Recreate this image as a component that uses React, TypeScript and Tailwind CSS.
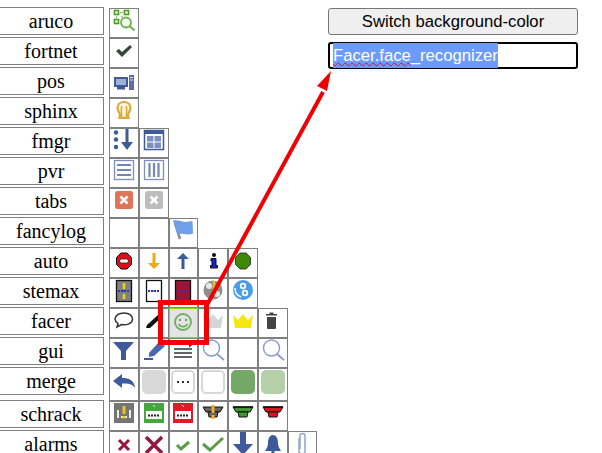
const blue = "#3f5a9a";

function Icon({ children }: { children: React.ReactNode }) {
  return (
    <svg viewBox="0 0 24 24" className="w-[24px] h-[24px] shrink-0">
      {children}
    </svg>
  );
}

const ArucoIcon = () => (
  <Icon>
    <g fill="none" stroke="#4c9a1e" strokeWidth="1.600">
      <rect x="2.500" y="1.500" width="4" height="4" />
      <rect x="12.500" y="1.500" width="4" height="4" />
      <rect x="2.500" y="10.500" width="4" height="4" />
    </g>
    <path d="M8 3.500h3M4.500 7v2M9 7.500h2" stroke="#9cc98a" strokeWidth="1.400" />
    <circle cx="14" cy="13.500" r="5" fill="#f2f8ee" stroke="#6fb14d" strokeWidth="1.800" />
    <path d="M17.500 17L22.500 21.500" stroke="#6fb14d" strokeWidth="2" />
  </Icon>
);
const FortnetIcon = () => (
  <Icon>
    <path d="M4 12l3-2 3 3 8-7 2 2-10 10z" fill="#34463a" />
  </Icon>
);
const PosIcon = () => (
  <Icon>
    <rect x="2" y="8" width="14" height="10" fill="#3f5a9a" />
    <rect x="4" y="10" width="10" height="6" fill="#9fb2d8" />
    <rect x="5" y="18" width="8" height="2.500" fill="#3f5a9a" />
    <rect x="17" y="6" width="5" height="15" fill="#5a6f9f" />
    <path d="M18 8.500h3M18 11h3" stroke="#dfe6f2" strokeWidth="1" />
  </Icon>
);
const SphinxIcon = () => (
  <Icon>
    <path d="M12 3c-4 0-6.500 2.500-6.500 6 0 3 2 4 2.500 6.500L7.500 19h9l-.5-3.500c.5-2.500 2.500-3.500 2.500-6.500 0-3.500-2.500-6-6.500-6z" fill="#fff6dc" stroke="#dca83a" strokeWidth="2.200" />
    <path d="M10 7c-1.500 3-.5 7 0 12M14 7c1.500 3 .5 7 0 12" fill="none" stroke="#dca83a" strokeWidth="1.600" />
  </Icon>
);
const DotsDownIcon = () => (
  <Icon>
    <circle cx="4" cy="3.500" r="2.200" fill={blue} />
    <circle cx="4" cy="10.500" r="2.200" fill={blue} />
    <circle cx="4" cy="18" r="2.200" fill={blue} />
    <path d="M13.500 0h3v13H21l-6 8-6-8h4.500z" fill={blue} />
  </Icon>
);
const GridIcon = () => (
  <Icon>
    <rect x="2.500" y="1.500" width="19" height="19" fill="#fff" stroke={blue} strokeWidth="1.500" />
    <rect x="2" y="1" width="20" height="4" fill={blue} />
    <rect x="5" y="7" width="6.500" height="5.500" fill="#7d90bd" />
    <rect x="12.500" y="7" width="6.500" height="5.500" fill="#7d90bd" />
    <rect x="5" y="13.500" width="6.500" height="5.500" fill="#7d90bd" />
    <rect x="12.500" y="13.500" width="6.500" height="5.500" fill="#7d90bd" />
  </Icon>
);
const RowsIcon = () => (
  <Icon>
    <rect x="2.500" y="1.500" width="19" height="19" fill="#fff" stroke="#7d90bd" strokeWidth="1.300" />
    <path d="M5 6h14M5 11h14M5 16h14" stroke="#7486b4" strokeWidth="2.200" />
  </Icon>
);
const ColsIcon = () => (
  <Icon>
    <rect x="2.500" y="1.500" width="19" height="19" fill="#fff" stroke="#7d90bd" strokeWidth="1.300" />
    <path d="M7.500 4v14M12 4v14M16.500 4v14" stroke="#7486b4" strokeWidth="2.200" />
  </Icon>
);
const BoxX = ({ color }: { color: string }) => (
  <Icon>
    <rect x="3" y="2" width="18" height="18" rx="2.500" fill={color} />
    <path d="M8.500 7.500l7 7M15.500 7.500l-7 7" stroke="#fff" strokeWidth="2.600" />
  </Icon>
);
const FlagIcon = () => (
  <Icon>
    <path d="M4 4l5 16" stroke="#8a8f94" strokeWidth="2.600" />
    <path d="M2 1.500c5-1 9 1.500 13 1.500 3 0 5-1 6.500-.5l.5 12c-3 1.500-6 1-9 .5-2-.5-4-.5-6.500.5z" fill="#6f9fe6" />
  </Icon>
);
const NoEntryIcon = () => (
  <Icon>
    <path d="M9 4h6l4.500 4.500v7L15 20H9l-4.500-4.500v-7z" fill="#e5091a" stroke="#111" strokeWidth="1" />
    <rect x="7.500" y="10" width="9" height="4" rx="2" fill="#fff" stroke="#222" strokeWidth=".8" />
  </Icon>
);
const SmallArrow = ({ color, up }: { color: string; up?: boolean }) => (
  <Icon>
    <path d={up ? "M10.500 20V10H6l6-6 6 6h-4.500v10z" : "M10.500 4v10H6l6 6 6-6h-4.500V4z"} fill={color} />
  </Icon>
);
const BigDownIcon = () => (
  <Icon>
    <path d="M9 0h6v12h7L12 23 2 12h7z" fill={blue} />
  </Icon>
);
const InfoIcon = () => (
  <Icon>
    <circle cx="13" cy="6" r="2" fill="#111" />
    <path d="M10 9.500h5v7h1.500v2.500h-7v-2.500H11v-4.500h-1z" fill="#1420d0" stroke="#111" strokeWidth="1" />
  </Icon>
);
const OctagonIcon = () => (
  <Icon>
    <path d="M9 4h6l4.500 4.500v7L15 20H9l-4.500-4.500v-7z" fill="#3c8a08" stroke="#222" strokeWidth=".8" />
  </Icon>
);
const Device = ({ bg, line }: { bg: string; line: string }) => (
  <Icon>
    <rect x="4.500" y="1.500" width="15" height="21" fill={bg} stroke="#111" strokeWidth="1.300" />
    <path d="M6 12h12" stroke="#2436c0" strokeWidth="2" strokeDasharray="2 1" />
    <path d="M7 12h10" stroke="#d81020" strokeWidth="1" strokeDasharray="1 3" />
    {line !== "" && <path d="M12 4v6M12 15v5" stroke={line} strokeWidth="2.500" />}
  </Icon>
);
const GearIcon = () => (
  <Icon>
    <circle cx="12" cy="11" r="9.500" fill="#8e8e8e" />
    <circle cx="8" cy="7" r="3" fill="#e8e8e8" />
    <circle cx="16" cy="15" r="3" fill="#e8e8e8" />
    <path d="M13 2v11" stroke="#e8c01a" strokeWidth="2.500" />
  </Icon>
);
const BlueCircleIcon = () => (
  <Icon>
    <circle cx="12" cy="11" r="10" fill="#4a9be8" />
    <circle cx="12" cy="7" r="3.200" fill="#fff" />
    <circle cx="14" cy="14" r="3.200" fill="#fff" />
    <circle cx="12" cy="7" r="1.400" fill="#4a9be8" />
    <circle cx="14" cy="14" r="1.400" fill="#4a9be8" />
    <path d="M4 9c0 5 3 8 6 9" fill="none" stroke="#fff" strokeWidth="1.500" />
  </Icon>
);
const BubbleIcon = () => (
  <Icon>
    <path d="M12 4c-5 0-9 2.500-9 6 0 2 1.500 3.500 3 4.500L5 18l4.500-2.500c5 1 11-1 11-5.500 0-3.500-3.500-6-8.500-6z" fill="#fff" stroke="#333" strokeWidth="1.500" />
  </Icon>
);
const PenIcon = () => (
  <Icon>
    <path d="M4 19l1-3L17 5l3 3L8 19z" fill="#111" />
  </Icon>
);
const SmileIcon = () => (
  <Icon>
    <circle cx="12" cy="13" r="8" fill="none" stroke="#6fae62" strokeWidth="1.800" />
    <circle cx="9" cy="11" r="1.300" fill="#6fae62" />
    <circle cx="15" cy="11" r="1.300" fill="#6fae62" />
    <path d="M7.500 15c2 3.500 7 3.500 9 0" fill="none" stroke="#6fae62" strokeWidth="1.600" />
  </Icon>
);
const Crown = ({ color }: { color: string }) => (
  <Icon>
    <path d="M2 6l5 5 5-6 5 6 5-5-2 13H4z" fill={color} />
  </Icon>
);
const TrashIcon = () => (
  <Icon>
    <path d="M6 8h9v11a1 1 0 0 1-1 1H7a1 1 0 0 1-1-1z" fill="#444" />
    <path d="M5 5h11v1.500H5zM8.500 3.500h4V5h-4z" fill="#444" />
  </Icon>
);
const FunnelIcon = () => (
  <Icon>
    <path d="M1 3h21l-8 9v9H9v-9z" fill={blue} />
  </Icon>
);
const BluePenIcon = () => (
  <Icon>
    <path d="M7 14L17 3l6 4-11 10-5 1z" fill="#4a68ad" />
    <path d="M2 19h9v2H2z" fill={blue} />
  </Icon>
);
const ListIcon = () => (
  <Icon>
    <path d="M3 5h15M3 10h18M3 14h18M3 18h18" stroke="#333" strokeWidth="1.300" />
    <path d="M18 2.500l4 3-4 3z" fill="#333" />
  </Icon>
);
const SearchIcon = () => (
  <Icon>
    <circle cx="10.500" cy="9" r="8" fill="#fff" stroke="#8a9ccb" strokeWidth="1.400" />
    <path d="M16 15l7 6" stroke="#8a9ccb" strokeWidth="1.800" />
  </Icon>
);
const BackIcon = () => (
  <Icon>
    <path d="M1 11l9-7v4c7 0 12 2 13 10-3-4-6-4.500-13-4.500V18z" fill={blue} />
  </Icon>
);
const Square = ({ bg, border }: { bg: string; border?: string }) => (
  <div className="w-[24px] h-[24px] rounded-[5px] border-2" style={{ background: bg, borderColor: border ?? bg }} />
);
const DotsSquare = () => (
  <div className="w-[24px] h-[24px] rounded-[5px] flex items-center justify-center gap-[3px] border-2 border-[#d8d8d8] bg-white">
    <span className="w-[2px] h-[2px] bg-[#333]" />
    <span className="w-[2px] h-[2px] bg-[#333]" />
    <span className="w-[2px] h-[2px] bg-[#333]" />
  </div>
);
const AlarmGray = () => (
  <Icon>
    <rect x="2" y="1" width="20" height="20" fill="#757575" />
    <path d="M6 8v8M18 8v8M9 15h6" stroke="#eee" strokeWidth="2" />
    <path d="M12 4v8M12 14v2.500" stroke="#f0c020" strokeWidth="3" />
  </Icon>
);
const AlarmBox = ({ color }: { color: string }) => (
  <Icon>
    <rect x="2" y="1" width="20" height="20" fill={color} />
    <path d="M11 3l2 2" stroke="#fff" strokeWidth="1" />
    <rect x="4" y="9" width="16" height="8" fill="#fff" />
    <path d="M6 13.500h12" stroke="#222" strokeWidth="2" strokeDasharray="2 1" />
  </Icon>
);
const Siren = ({ color }: { color: string }) => (
  <Icon>
    <path d="M2 5h20l-3 5H5z" fill={color} stroke="#111" strokeWidth="1" />
    <path d="M7 10h10l-1 5H8z" fill={color} stroke="#111" strokeWidth="1" />
    <path d="M2 5h20" stroke="#111" strokeWidth="1.500" />
  </Icon>
);
const SirenYellow = () => (
  <Icon>
    <path d="M2 5h20l-3 5H5z" fill="#666" stroke="#111" strokeWidth="1" />
    <path d="M7 10h10l-1 5H8z" fill="#666" stroke="#111" strokeWidth="1" />
    <path d="M12 3v8M12 13v4" stroke="#f0b020" strokeWidth="3" />
  </Icon>
);
const XIcon = ({ size, width }: { size: number; width: number }) => {
  const a = 12 - size;
  const b = 12 + size;
  return (
    <Icon>
      <path d={`M${a} ${a + 1}L${b} ${b + 1}M${b} ${a + 1}L${a} ${b + 1}`} stroke="#96163f" strokeWidth={width} />
    </Icon>
  );
};
const CheckIcon = ({ big }: { big?: boolean }) => (
  <Icon>
    <path d={big ? "M2 12l7 6L22 6" : "M6 13l4 4 8-7"} fill="none" stroke="#5b9b4b" strokeWidth="3" />
  </Icon>
);
const BellIcon = () => (
  <Icon>
    <path d="M12 3c-3 0-5 3-5 8 0 4-2 6-3 8h16c-1-2-3-4-3-8 0-5-2-8-5-8z" fill={blue} />
    <rect x="10.500" y="19" width="3" height="3" fill={blue} />
  </Icon>
);
const ClipIcon = () => (
  <Icon>
    <path d="M9 6v13a3 3 0 0 0 6 0V4a2.500 2.500 0 0 0-5 0v13" fill="none" stroke="#9aa9d0" strokeWidth="1.600" />
  </Icon>
);

type Row = { name: string; cells: (React.ReactNode | null)[]; tall?: boolean };

const rows: Row[] = [
  { name: "aruco", cells: [<ArucoIcon />] },
  { name: "fortnet", cells: [<FortnetIcon />] },
  { name: "pos", cells: [<PosIcon />] },
  { name: "sphinx", cells: [<SphinxIcon />] },
  { name: "fmgr", cells: [<DotsDownIcon />, <GridIcon />] },
  { name: "pvr", cells: [<RowsIcon />, <ColsIcon />] },
  { name: "tabs", cells: [<BoxX color="#e0755a" />, <BoxX color="#bdbdbd" />] },
  { name: "fancylog", cells: [null, null, <FlagIcon />] },
  { name: "auto", cells: [<NoEntryIcon />, <SmallArrow color="#f0a818" />, <SmallArrow color={blue} up />, <InfoIcon />, <OctagonIcon />] },
  { name: "stemax", cells: [<Device bg="#808080" line="#f0d010" />, <Device bg="#fff" line="" />, <Device bg="#9a1438" line="" />, <GearIcon />, <BlueCircleIcon />] },
  { name: "facer", cells: [<BubbleIcon />, <PenIcon />, <SmileIcon />, <Crown color="#d6d6d6" />, <Crown color="#f6e712" />, <TrashIcon />] },
  { name: "gui", cells: [<FunnelIcon />, <BluePenIcon />, <ListIcon />, <SearchIcon />, null, <SearchIcon />] },
  { name: "merge", tall: true, cells: [<BackIcon />, <Square bg="#d8d8d8" />, <DotsSquare />, <Square bg="#fff" border="#d8d8d8" />, <Square bg="#74a866" />, <Square bg="#b3d0a8" />] },
  { name: "schrack", cells: [<AlarmGray />, <AlarmBox color="#45a83d" />, <AlarmBox color="#dc1c28" />, <SirenYellow />, <Siren color="#3f9a34" />, <Siren color="#d8141c" />] },
  { name: "alarms", cells: [<XIcon size={5} width={3} />, <XIcon size={8} width={3.500} />, <CheckIcon />, <CheckIcon big />, <BigDownIcon />, <BellIcon />, <ClipIcon />] },
];

export default function App() {
  return (
    <div className="relative w-[602px] h-[453px] overflow-hidden bg-white flex">
      <div className="w-[328px] shrink-0 pt-[7px] flex flex-col">
        {rows.map((row) => (
          <div key={row.name} className={`flex items-start ${row.tall ? "h-[33px]" : "h-[30px]"}`}>
            <div className="ml-[-2px] w-[106px] h-[28px] border border-[#808080] flex items-center justify-center font-['Liberation_Serif',serif] text-[20px] text-black">
              {row.name}
            </div>
            <div className="ml-[5px] mt-[1px] flex">
              {row.cells.map((cell, i) => (
                <div
                  key={i}
                  className={`w-[29.75px] ${row.tall ? "h-[33px] pt-[1px]" : "h-[30px]"} border flex items-start justify-center overflow-hidden ${
                    row.name === "facer" && i === 2 ? "border-[#80e020] bg-[#e4e4e4]" : "border-[#808080]"
                  }`}
                >
                  {cell}
                </div>
              ))}
            </div>
          </div>
        ))}
      </div>
      <div className="w-[250px] pt-[8px] flex flex-col gap-[7px] font-['Liberation_Sans',sans-serif]">
        <button className="h-[27px] border border-[#767676] rounded-[3px] bg-[#efefef] text-[16.67px] leading-[22px] text-black">
          Switch background-color
        </button>
        <div className="h-[27px] border-2 border-black rounded-[3px] px-[3px] flex items-center text-[16.67px] text-white">
          <span className="bg-[#6b9bff]">
            <span className="underline decoration-wavy decoration-[#e01010] decoration-1">Facer.face</span>_recognizer
          </span>
        </div>
      </div>
      {/* red annotation over the icons */}
      <div className="absolute left-[158px] top-[300px] w-[51px] h-[45px] border-[5px] border-[#f00000]" />
      <svg className="absolute left-0 top-0 pointer-events-none" width="602" height="453">
        <path d="M207.500 304L323 92" stroke="#f00000" strokeWidth="4" fill="none" />
        <path d="M331 71L317 86 327 91z" fill="#f00000" />
      </svg>
    </div>
  );
}
